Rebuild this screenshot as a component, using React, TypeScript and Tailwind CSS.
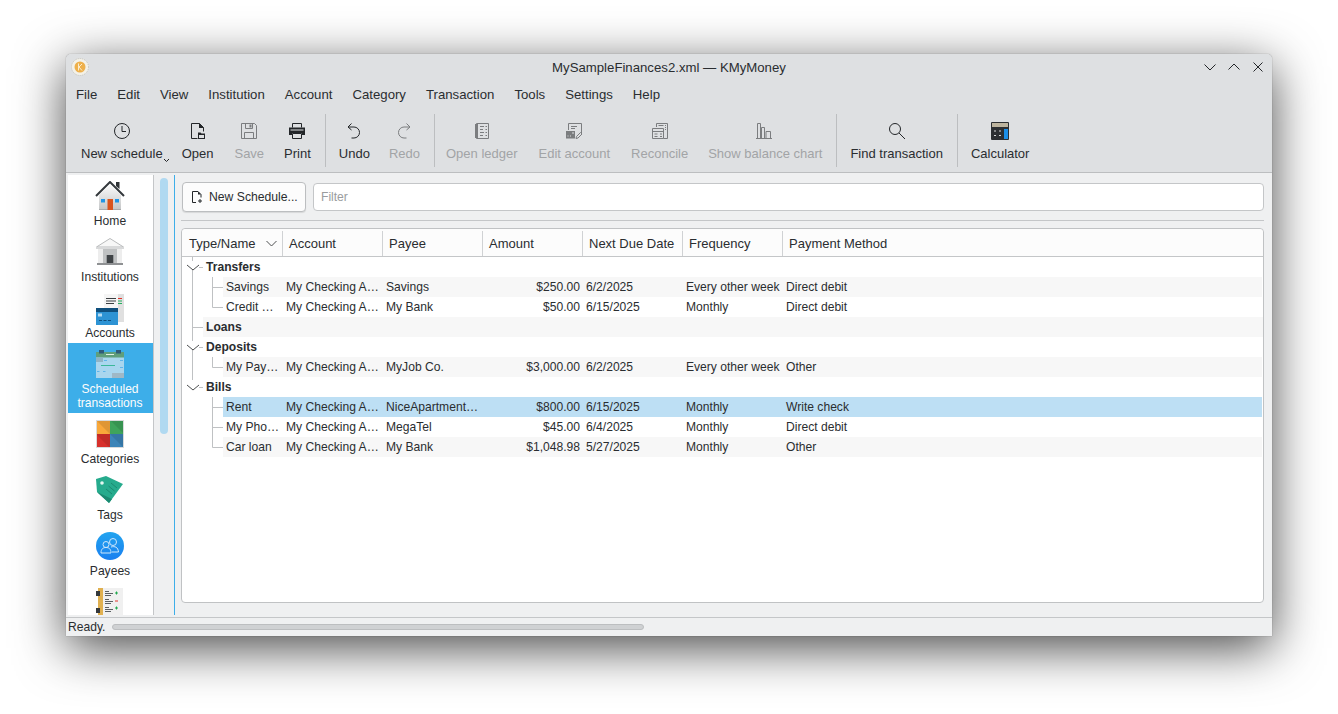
import type { ReactNode } from 'react';

const GRAY = '#232629';
const DIM = '#7b7d7f';

const menus = ['File', 'Edit', 'View', 'Institution', 'Account', 'Category', 'Transaction', 'Tools', 'Settings', 'Help'];

function ToolIcon({ children }: { children: ReactNode }) {
  return (
    <svg width="18" height="18" viewBox="0 0 18 18" fill="none" strokeWidth="1">
      {children}
    </svg>
  );
}

function ToolButton({ label, icon, disabled, arrow, nudge }: { label: string; icon: ReactNode; disabled?: boolean; arrow?: boolean; nudge?: string }) {
  return (
    <div className={`relative flex flex-col items-center px-[10px] pt-[14px] ${nudge ?? ''}`}>
      <div className="h-[18px] w-[18px]">{icon}</div>
      <div className={`mt-[6px] text-[13px] leading-[16px] whitespace-nowrap ${disabled ? 'text-[#a2a4a6]' : 'text-[#2a2d30]'}`}>{label}</div>
      {arrow && (
        <svg className="absolute right-[3px] top-[50px]" width="7" height="5" viewBox="0 0 7 5" fill="none">
          <path d="M1 1l2.5 2.5L6 1" stroke={GRAY} />
        </svg>
      )}
    </div>
  );
}

function ToolSep() {
  return <div className="mt-[6px] ml-[4px] mr-[3px] h-[53px] w-px bg-[#bcbec0]" />;
}

const toolIcons = {
  clock: (
    <ToolIcon>
      <circle cx="9" cy="9" r="7.5" stroke={GRAY} />
      <path d="M9 4v5.5h4" stroke={GRAY} />
    </ToolIcon>
  ),
  open: (
    <ToolIcon>
      <path d="M8.500 16.500H2.500V1.500h8l4 4v4" stroke={GRAY} />
      <path d="M10 1l5 5h-5z" fill={GRAY} />
      <path d="M9 17v-6.500h2.500l1 1H16V17z" fill={GRAY} />
      <path d="M10 16v-3h5v3z" fill="#dee0e2" />
    </ToolIcon>
  ),
  save: (
    <ToolIcon>
      <path d="M1.500 1.500h13l2 2v13h-15z" stroke={DIM} />
      <path d="M5.500 1.500v5h7v-5M4.500 16.500v-6h9v6" stroke={DIM} />
      <path d="M9.500 2.500h2v3h-2z" fill={DIM} />
    </ToolIcon>
  ),
  print: (
    <ToolIcon>
      <path d="M4.500 5.500v-4h9v4" stroke={GRAY} />
      <path d="M1 5.500h16V13h-3v-2H4v2H1z" fill={GRAY} />
      <path d="M2.500 8h13" stroke="#dee0e2" />
      <path d="M4.500 11.500h9v5h-9z" stroke={GRAY} />
    </ToolIcon>
  ),
  undo: (
    <ToolIcon>
      <path d="M6.500 1.500L3 5l3.500 3" stroke={GRAY} />
      <path d="M3.500 5H9a5 5 0 0 1 0 11H6.500" stroke={GRAY} />
    </ToolIcon>
  ),
  redo: (
    <ToolIcon>
      <path d="M11.500 1.500L15 5l-3.500 3" stroke={DIM} />
      <path d="M14.500 5H9a5 5 0 0 0 0 11h2.500" stroke={DIM} />
    </ToolIcon>
  ),
  ledger: (
    <ToolIcon>
      <path d="M3.500 1.500h12v15h-12z" stroke={DIM} />
      <path d="M2 2h3v14H2z" fill={DIM} />
      <path d="M7 4.500h4M12.500 4.500H14M7 7.500h3M12.500 7.500H14M7 10.500h4M12.500 10.500H14M7 13.500h3M12.500 13.500H14" stroke={DIM} />
    </ToolIcon>
  ),
  account: (
    <ToolIcon>
      <path d="M3.500 8V1.500h13V11" stroke={DIM} />
      <path d="M6 4.500h6M6 6.500h4" stroke={DIM} />
      <path d="M1 9h9v7.500H1z" fill={DIM} />
      <path d="M2.500 14h1M5 14h1M7 11h2" stroke="#dee0e2" />
      <path d="M11 16.500l.5-2 4-4 1.500 1.500-4 4z" stroke={DIM} />
    </ToolIcon>
  ),
  reconcile: (
    <ToolIcon>
      <path d="M5.500 5V1.500h11v15h-4" stroke={DIM} />
      <path d="M7.500 3.500h5M14 3.500h1M14 5.500h1M14 7.500h1" stroke={DIM} />
      <path d="M1.500 6.500h11v10h-11zM1.500 9.500h11" stroke={DIM} />
      <path d="M3.500 12h3M3.500 14.500h3M9 12h2M9 14.500h2" stroke={DIM} />
    </ToolIcon>
  ),
  chart: (
    <ToolIcon>
      <path d="M0 16.500h16" stroke={DIM} />
      <path d="M1.500 16V1.500h3V16M5.500 16V5.500h3V16M10 16V9.500h4.500V16" stroke={DIM} />
    </ToolIcon>
  ),
  find: (
    <ToolIcon>
      <circle cx="7" cy="7" r="5.500" stroke={GRAY} />
      <path d="M11 11l6 6" stroke={GRAY} />
    </ToolIcon>
  ),
  calc: (
    <ToolIcon>
      <rect x="0" y="0" width="18" height="18" rx="1" fill="#2c2f32" />
      <rect x="1" y="1" width="16" height="4" fill="#bdb49e" />
      <rect x="13" y="7" width="4" height="10" fill="#1b8fe8" />
      <path d="M3 9h2M3 13.500h2M8 9h2M8 13.500h2" stroke="#d7d9da" />
    </ToolIcon>
  ),
};

function HomeIcon() {
  return (
    <svg width="32" height="32" viewBox="0 0 32 32">
      <defs>
        <linearGradient id="homeWall" x1="0" y1="0" x2="0" y2="1">
          <stop offset="0" stopColor="#fafafa" />
          <stop offset="1" stopColor="#c4c6c7" />
        </linearGradient>
      </defs>
      <path d="M5 14L16 4l11 10v15H5z" fill="url(#homeWall)" />
      <path d="M5 28h22v1H5z" fill="#a9abad" />
      <path d="M22 1h3.500v7L22 5z" fill="#2f3336" />
      <path d="M2 15L16 1l14 14" fill="none" stroke="#34393d" strokeWidth="2" />
      <path d="M13.500 18H19v11h-5.500z" fill="#d9541e" />
      <path d="M7 18h4v3.500H7zM21 18h4v3.500h-4z" fill="#2196e6" />
    </svg>
  );
}

function BankIcon() {
  return (
    <svg width="32" height="32" viewBox="0 0 32 32">
      <path d="M2.500 10L16 1.500 29.500 10z" fill="#f7f7f7" stroke="#b9bbbc" />
      <path d="M2 10h28v2H2z" fill="#d8d9da" />
      <path d="M9 12h14v14H9z" fill="#bfc1c2" />
      <path d="M4 12h5v14H4zM23 12h5v14h-5z" fill="#ededed" />
      <path d="M12.700 18h6.600v8h-6.600z" fill="#3f4346" />
      <path d="M3 26h26v2H3z" fill="#8f9193" />
    </svg>
  );
}

function AccountsIcon() {
  return (
    <svg width="32" height="32" viewBox="0 0 32 32">
      <path d="M10 1h20v28H10z" fill="#f5f5f5" />
      <path d="M24 1h6v28h-6z" fill="#e0e0e0" />
      <path d="M12 5h10v1H12zM12 7.500h10v1H12zM12 10h8v1h-8z" fill="#3b3f42" />
      <path d="M24 5h4v1h-4z" fill="#e0352b" />
      <path d="M24 7.500h4v1h-4zM24 10h4v1h-4z" fill="#27ae60" />
      <rect x="2" y="15" width="22" height="17" fill="#2d93d4" />
      <rect x="2" y="15" width="22" height="4" fill="#0f4f7d" />
      <rect x="4" y="20.500" width="4" height="3" fill="#b5dcf3" />
      <path d="M5 27h3v1H5zM9.500 27h3v1h-3zM14 27h3v1h-3z" fill="#0f4f7d" />
    </svg>
  );
}

function ScheduleIcon() {
  return (
    <svg width="32" height="32" viewBox="0 0 32 32">
      <rect x="2" y="3" width="28" height="26" fill="#a9d6ee" />
      <rect x="2" y="3" width="28" height="5.500" fill="#5f9e7c" />
      <rect x="5" y="1" width="5" height="3.500" fill="#2f5a7a" />
      <rect x="22" y="1" width="5" height="3.500" fill="#2f5a7a" />
      <rect x="12" y="5" width="8" height="1" fill="#dff0e6" />
      <path d="M2 8.500h7V13H2z" fill="#8fb4c6" />
      <path d="M7 16h14v1H7z" fill="#3bb89a" />
      <path d="M10 11h3v1h-3zM26 11h3v1h-3zM3 22h2.500v1H3zM9 22h2.500v1H9zM26 18h3v1h-3z" fill="#5fb5ea" />
      <path d="M18 24h12v5H18z" fill="#9fb8c6" />
    </svg>
  );
}

function CategoriesIcon() {
  return (
    <svg width="32" height="32" viewBox="0 0 32 32">
      <rect x="2" y="1" width="14" height="14" fill="#f9a83a" />
      <rect x="16" y="1" width="14" height="14" fill="#3fa45b" />
      <rect x="2" y="15" width="14" height="14" fill="#d7302c" />
      <rect x="16" y="15" width="14" height="14" fill="#3c84b8" />
      <path d="M16 1l14 14V1zM2 15l14 14V15zM2 1l14 14V1zM16 15l14 14V15z" fill="#000" opacity="0.1" />
      <rect x="2.500" y="1.500" width="27" height="27" fill="none" stroke="#d8dadb" />
    </svg>
  );
}

function TagIcon() {
  return (
    <svg width="32" height="32" viewBox="0 0 32 32">
      <path d="M2 4l10-3 17 8-14 19L3 17z" fill="#26ab8d" />
      <path d="M3 17l12 11 3-4z" fill="#1b8a71" />
      <circle cx="8" cy="8" r="1.800" fill="#e4f6f1" />
      <path d="M17 8l6 5M14.500 11l6 5M12 14l6 5" stroke="#1b8a71" strokeWidth="1" />
    </svg>
  );
}

function PayeesIcon() {
  return (
    <svg width="32" height="32" viewBox="0 0 32 32" fill="none">
      <defs>
        <linearGradient id="payeeFill" x1="0" y1="0" x2="0" y2="1">
          <stop offset="0" stopColor="#22a4ef" />
          <stop offset="1" stopColor="#1a7ff0" />
        </linearGradient>
      </defs>
      <circle cx="16" cy="15" r="14" fill="url(#payeeFill)" />
      <circle cx="19" cy="11" r="3.500" stroke="#cfe8fb" />
      <circle cx="12" cy="13.500" r="3" stroke="#cfe8fb" />
      <path d="M7 22c0-4 2-5.500 5-5.500s5 1.500 5 5.500zM17 16c4-1 7 0 7.500 5H18" stroke="#cfe8fb" />
    </svg>
  );
}

function LedgersIcon() {
  return (
    <svg width="32" height="32" viewBox="0 0 32 32">
      <rect x="9" y="1" width="20" height="31" fill="#f0f0f0" />
      <rect x="4" y="1" width="5" height="31" fill="#e0b050" />
      <rect x="2" y="4" width="4" height="5" fill="#34383b" />
      <rect x="2" y="21" width="4" height="5" fill="#34383b" />
      <path d="M11 4h4v1h-4zM11 6h8v1h-8zM11 8h6v1h-6zM11 12h4v1h-4zM11 14h8v1h-8zM11 16h6v1h-6zM11 20h4v1h-4zM11 22h8v1h-8zM11 24h6v1h-6z" fill="#5b5f62" />
      <path d="M21 5.500h3v1h-3zM22 4.500h1v3h-1zM21 20.500h3v1h-3zM22 19.500h1v3h-1z" fill="#22a94f" />
      <path d="M21 13.500h3v1h-3z" fill="#e0352b" />
    </svg>
  );
}

const sideItems: { key: string; label: string[]; icon: ReactNode; active?: boolean }[] = [
  { key: 'home', label: ['Home'], icon: <HomeIcon /> },
  { key: 'inst', label: ['Institutions'], icon: <BankIcon /> },
  { key: 'acc', label: ['Accounts'], icon: <AccountsIcon /> },
  { key: 'sched', label: ['Scheduled', 'transactions'], icon: <ScheduleIcon />, active: true },
  { key: 'cat', label: ['Categories'], icon: <CategoriesIcon /> },
  { key: 'tags', label: ['Tags'], icon: <TagIcon /> },
  { key: 'pay', label: ['Payees'], icon: <PayeesIcon /> },
  { key: 'ledgers', label: [], icon: <LedgersIcon /> },
];

const columns = ['Account', 'Payee', 'Amount', 'Next Due Date', 'Frequency', 'Payment Method'];

type Child = { name: string; payee: string; amount: string; date: string; freq: string; method: string; alt?: boolean; selected?: boolean; last?: boolean; outer: boolean };

function GroupGutter({ kind }: { kind: 'open' | 'leaf' | 'last' }) {
  const line = '#bfc1c3';
  return (
    <svg width="21" height="20" viewBox="0 0 21 20" fill="none" className="shrink-0">
      {kind === 'leaf' && <path d="M10.500 0v20M10.500 10.500H21" stroke={line} />}
      {kind === 'open' && <path d="M10.500 0v4M10.500 12v8M17 10.500h4" stroke={line} />}
      {kind === 'last' && <path d="M10.500 0v3M17 10.500h4" stroke={line} />}
      {kind !== 'leaf' && <path d="M5 8l6 5 6-5" stroke="#4d4f51" />}
    </svg>
  );
}

function ChildGutter({ outer, last }: { outer: boolean; last?: boolean }) {
  const line = '#bfc1c3';
  return (
    <svg width="41" height="20" viewBox="0 0 41 20" fill="none" className="shrink-0">
      {outer && <path d="M10.500 0v20" stroke={line} />}
      <path d={`M30.500 0V${last ? 10.5 : 20}M30.500 10.500H41`} stroke={line} />
    </svg>
  );
}

function GroupRow({ name, kind, alt }: { name: string; kind: 'open' | 'leaf' | 'last'; alt?: boolean }) {
  return (
    <div className="flex h-5 items-center">
      <GroupGutter kind={kind} />
      <div className={`flex h-5 flex-1 items-center pl-[3px] font-bold ${alt ? 'bg-[#f7f7f7]' : ''}`}>{name}</div>
    </div>
  );
}

function ChildRow({ row }: { row: Child }) {
  const bg = row.selected ? 'bg-[#bddff4]' : row.alt ? 'bg-[#f7f7f7]' : '';
  return (
    <div className="flex h-5 items-center">
      <ChildGutter outer={row.outer} last={row.last} />
      <div className={`mr-px flex h-5 flex-1 items-center ${bg}`}>
        <div className="w-[60px] shrink-0 pl-[3px] whitespace-nowrap">{row.name}</div>
        <div className="w-[100px] shrink-0 pl-[3px] whitespace-nowrap">My Checking A…</div>
        <div className="w-[100px] shrink-0 pl-[3px] whitespace-nowrap">{row.payee}</div>
        <div className="w-[100px] shrink-0 pr-[3px] text-right whitespace-nowrap">{row.amount}</div>
        <div className="w-[100px] shrink-0 pl-[3px] whitespace-nowrap">{row.date}</div>
        <div className="w-[100px] shrink-0 pl-[3px] whitespace-nowrap">{row.freq}</div>
        <div className="pl-[3px] whitespace-nowrap">{row.method}</div>
      </div>
    </div>
  );
}

export default function App() {
  return (
    <div className="h-[714px] w-[1338px] overflow-hidden bg-white pt-[54px] pl-[66px] font-['Liberation_Sans',Arial,sans-serif] text-[#2a2d30]">
      <div className="flex h-[582px] w-[1206px] flex-col rounded-t-[5px] bg-[#eff0f1] shadow-[0_12px_50px_rgba(0,0,0,0.72),0_0_1px_rgba(0,0,0,0.6)]">
        {/* title bar */}
        <div className="relative flex h-[27px] items-center justify-center rounded-t-[5px] bg-[#dee0e2] text-[13.2px]">
          <svg className="absolute left-[5px] top-[4px]" width="18" height="18" viewBox="0 0 18 18">
            <circle cx="9" cy="9" r="8.500" fill="#f3f1e8" stroke="#c6c4bb" strokeDasharray="1 1" />
            <circle cx="9" cy="9" r="5.500" fill="#eeb04a" />
            <path d="M7.500 5.500v7M11 6L8 9l3 3.500" stroke="#fbeccb" fill="none" />
          </svg>
          <span>MySampleFinances2.xml — KMyMoney</span>
          <div className="absolute right-[8px] top-[7px] flex gap-[12px]">
            <svg width="12" height="12" viewBox="0 0 12 12" fill="none"><path d="M.5 3.500L6 9l5.500-5.500" stroke={GRAY} /></svg>
            <svg width="12" height="12" viewBox="0 0 12 12" fill="none"><path d="M.5 8.500L6 3l5.500 5.500" stroke={GRAY} /></svg>
            <svg width="12" height="12" viewBox="0 0 12 12" fill="none"><path d="M1.500 1.500l9 9M10.500 1.500l-9 9" stroke={GRAY} /></svg>
          </div>
        </div>

        {/* menu bar */}
        <div className="flex h-[27px] items-center gap-[20px] bg-[#dee0e2] pl-[10px] text-[13.2px]">
          {menus.map((m) => (
            <span key={m}>{m}</span>
          ))}
        </div>

        {/* toolbar */}
        <div className="flex h-[65px] border-b border-[#bcbec0] bg-[#dee0e2] pl-[5px]">
          <ToolButton label="New schedule" icon={toolIcons.clock} arrow />
          <ToolButton label="Open" icon={toolIcons.open} nudge="-ml-px" />
          <ToolButton label="Save" icon={toolIcons.save} disabled nudge="ml-px" />
          <ToolButton label="Print" icon={toolIcons.print} />
          <ToolSep />
          <ToolButton label="Undo" icon={toolIcons.undo} />
          <ToolButton label="Redo" icon={toolIcons.redo} disabled nudge="-ml-px" />
          <ToolSep />
          <ToolButton label="Open ledger" icon={toolIcons.ledger} disabled nudge="-ml-[2px]" />
          <ToolButton label="Edit account" icon={toolIcons.account} disabled nudge="ml-px" />
          <ToolButton label="Reconcile" icon={toolIcons.reconcile} disabled nudge="ml-px" />
          <ToolButton label="Show balance chart" icon={toolIcons.chart} disabled />
          <ToolSep />
          <ToolButton label="Find transaction" icon={toolIcons.find} />
          <ToolSep />
          <ToolButton label="Calculator" icon={toolIcons.calc} />
        </div>

        {/* body */}
        <div className="flex h-[444px] pt-[2px] pb-[2px]">
          {/* sidebar */}
          <div className="ml-[2px] h-full w-[86px] shrink-0 overflow-hidden border-r border-[#c4c6c8] bg-white">
            {sideItems.map((item) => (
              <div
                key={item.key}
                className={`flex flex-col items-center pt-[6px] pr-px pb-[3px] text-[12.1px] leading-[14px] ${item.active ? 'bg-[#3daee9] text-[#fcfcfc]' : ''}`}
              >
                <div className="mb-px h-[32px] w-[32px]">{item.icon}</div>
                {item.label.map((l) => (
                  <span key={l}>{l}</span>
                ))}
              </div>
            ))}
          </div>
          {/* sidebar scrollbar */}
          <div className="h-full w-[20px] shrink-0 pt-[3px] pl-[6px]">
            <div className="h-[256px] w-[8px] rounded-full bg-[#b0d9f1]" />
          </div>
          {/* main view */}
          <div className="flex h-full min-w-0 flex-1 flex-col border-l border-[#3daee9] pt-[7px] pr-[8px] pb-[12px] pl-[7px]">
            <div className="flex h-[30px] gap-[7px]">
              <div className="flex w-[124px] items-center gap-[6px] rounded-[4px] border border-[#bcbec0] bg-[#fcfcfc] pl-[8px] text-[12.2px] shadow-[0_1px_1px_rgba(0,0,0,0.1)]">
                <svg width="12" height="12" viewBox="0 0 12 12" fill="none" className="shrink-0">
                  <path d="M5 11.500H1.500v-11H7l3 3v3" stroke={GRAY} />
                  <path d="M7 .5l3 3H7z" fill={GRAY} />
                  <path d="M9 8v4M7 10h4" stroke={GRAY} />
                </svg>
                <span className="whitespace-nowrap">New Schedule...</span>
              </div>
              <div className="my-px flex flex-1 items-center rounded-[4px] border border-[#c4c6c8] bg-white pl-[7px] text-[12.1px] text-[#9a9c9e]">Filter</div>
            </div>
            <div className="mt-[8px] -ml-px h-px bg-[#c4c6c8]" />
            <div className="mt-[7px] -ml-px flex-1 rounded-[4px] border border-[#c0c2c4] bg-white text-[12.1px]">
              <div className="flex h-[28px] rounded-t-[4px] border-b border-[#c4c6c8] bg-[#fcfcfc] pt-[2px] text-[13px]">
                <div className="flex w-[101px] shrink-0 items-center justify-between border-r border-[#d0d2d4] pr-[5px] pl-[7px]">
                  <span>Type/Name</span>
                  <svg width="11" height="7" viewBox="0 0 11 7" fill="none"><path d="M.5 1l5 5 5-5" stroke="#4d4f51" /></svg>
                </div>
                {columns.map((c, i) => (
                  <div
                    key={c}
                    className={`flex items-center pl-[6px] whitespace-nowrap ${i < columns.length - 1 ? 'w-[100px] shrink-0 border-r border-[#d0d2d4]' : 'flex-1'}`}
                  >
                    {c}
                  </div>
                ))}
              </div>
              <GroupRow name="Transfers" kind="open" />
              <ChildRow row={{ name: 'Savings', payee: 'Savings', amount: '$250.00', date: '6/2/2025', freq: 'Every other week', method: 'Direct debit', alt: true, outer: true }} />
              <ChildRow row={{ name: 'Credit …', payee: 'My Bank', amount: '$50.00', date: '6/15/2025', freq: 'Monthly', method: 'Direct debit', last: true, outer: true }} />
              <GroupRow name="Loans" kind="leaf" alt />
              <GroupRow name="Deposits" kind="open" />
              <ChildRow row={{ name: 'My Pay…', payee: 'MyJob Co.', amount: '$3,000.00', date: '6/2/2025', freq: 'Every other week', method: 'Other', alt: true, last: true, outer: true }} />
              <GroupRow name="Bills" kind="last" />
              <ChildRow row={{ name: 'Rent', payee: 'NiceApartment…', amount: '$800.00', date: '6/15/2025', freq: 'Monthly', method: 'Write check', selected: true, outer: false }} />
              <ChildRow row={{ name: 'My Pho…', payee: 'MegaTel', amount: '$45.00', date: '6/4/2025', freq: 'Monthly', method: 'Direct debit', outer: false }} />
              <ChildRow row={{ name: 'Car loan', payee: 'My Bank', amount: '$1,048.98', date: '5/27/2025', freq: 'Monthly', method: 'Other', alt: true, last: true, outer: false }} />
            </div>
          </div>
        </div>

        {/* status bar */}
        <div className="flex h-[19px] items-center border-t border-[#c4c6c8] pl-[2px] text-[12.1px]">
          <span>Ready.</span>
          <div className="ml-[7px] h-[6px] w-[532px] rounded-full border border-[#bcbec0] bg-[#cfd1d3]" />
        </div>
      </div>
    </div>
  );
}
